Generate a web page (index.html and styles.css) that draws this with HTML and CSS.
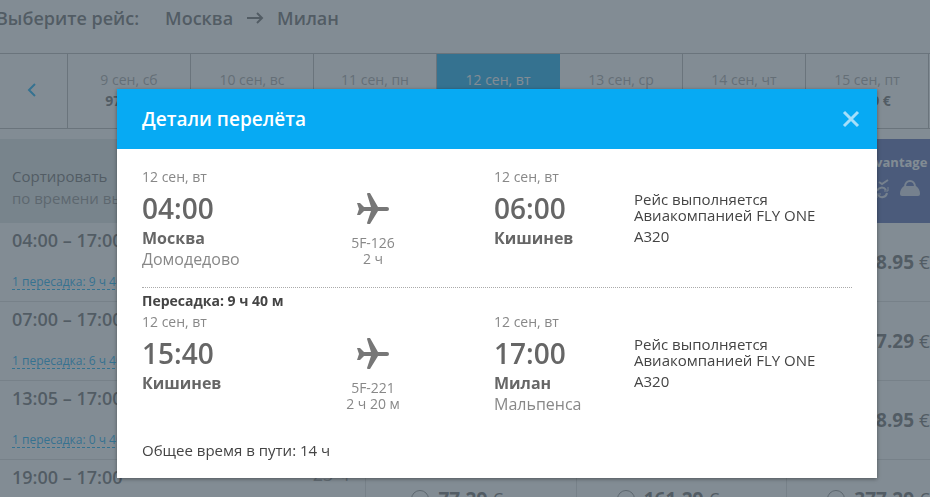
FILE: index.html
```
<!DOCTYPE html>
<html lang="ru">
<head>
  <meta charset="UTF-8">
  <meta name="viewport" content="width=device-width, initial-scale=1.0">
  <title>Выберите рейс</title>
  <link rel="stylesheet" href="styles.css">
</head>
<body>
  <main class="page">
    <h1 class="route">
      <span class="route-label">Выберите рейс:</span>
      <span>Москва</span>
      <svg class="route-arrow" width="18" height="12" viewBox="0 0 18 12"><path d="M1 6h15M11 1l5 5-5 5" fill="none" stroke="currentColor" stroke-width="2"/></svg>
      <span>Милан</span>
    </h1>

    <nav class="dates">
      <button class="prev" aria-label="Назад">
        <svg width="10" height="14" viewBox="0 0 10 14"><path d="M8 1L2 7l6 6" fill="none" stroke="currentColor" stroke-width="2"/></svg>
      </button>
      <button class="date">9 сен, сб<b>97.29 €</b></button>
      <button class="date">10 сен, вс</button>
      <button class="date">11 сен, пн</button>
      <button class="date active">12 сен, вт</button>
      <button class="date">13 сен, ср</button>
      <button class="date">14 сен, чт</button>
      <button class="date">15 сен, пт<b>97.29 €</b></button>
    </nav>

    <table class="flights">
      <thead>
        <tr>
          <th class="sort">Сортировать<br><span>по времени вылета</span></th>
          <th></th>
          <th></th>
          <th class="fare">
            Advantage
            <div class="fare-icons">
              <svg width="20" height="20" viewBox="0 0 20 20"><path d="M7 5V1h6v4M2 5h16v13H2z" fill="none" stroke="currentColor" stroke-width="2"/></svg>
              <svg width="20" height="20" viewBox="0 0 20 20"><g fill="none" stroke="currentColor" stroke-width="2"><path d="M8 3l3 2 6-4"/><path d="M6 12a5 5 0 0 1 9-1M16 14a5 5 0 0 1-9 2"/><path d="M17 8v4h-4M6 19v-4h4" stroke-width="1"/></g></svg>
              <svg width="20" height="20" viewBox="0 0 20 20"><path d="M5 8C5 0 15 0 15 8" fill="none" stroke="currentColor" stroke-width="2"/><path d="M4 7h12c3 2 4 5 4 8q0 2-2 2H2q-2 0-2-2c0-3 1-6 4-8z" fill="currentColor"/></svg>
              <svg width="20" height="20" viewBox="0 0 20 20"><circle cx="10" cy="11" r="8" fill="currentColor"/></svg>
            </div>
          </th>
        </tr>
      </thead>
      <tbody>
        <tr>
          <td class="flight"><div class="times">04:00 – 17:00</div><a href="#">1 пересадка: 9 ч 40 м</a></td>
          <td></td>
          <td></td>
          <td class="price"><label><input type="radio" name="fare"><b>378.95</b> €</label></td>
        </tr>
        <tr>
          <td class="flight"><div class="times">07:00 – 17:00</div><a href="#">1 пересадка: 6 ч 40 м</a></td>
          <td></td>
          <td></td>
          <td class="price"><label><input type="radio" name="fare"><b>377.29</b> €</label></td>
        </tr>
        <tr>
          <td class="flight"><div class="times">13:05 – 17:00</div><a href="#">1 пересадка: 0 ч 40 м</a></td>
          <td></td>
          <td></td>
          <td class="price"><label><input type="radio" name="fare"><b>378.95</b> €</label></td>
        </tr>
        <tr>
          <td class="flight"><div class="times">19:00 – 17:00 <span class="duration">23 ч</span></div></td>
          <td class="price"><label><input type="radio" name="fare"><b>77.29</b> €</label></td>
          <td class="price"><label><input type="radio" name="fare"><b>161.29</b> €</label></td>
          <td class="price"><label><input type="radio" name="fare"><b>377.29</b> €</label></td>
        </tr>
      </tbody>
    </table>
  </main>

  <div class="overlay">
    <section class="modal" role="dialog" aria-labelledby="modal-title">
      <header class="modal-header">
        <h2 id="modal-title">Детали перелёта</h2>
        <button class="close" aria-label="Закрыть">
          <svg width="18" height="18" viewBox="0 0 18 18"><path d="M2 2l14 14M16 2L2 16" stroke="currentColor" stroke-width="3"/></svg>
        </button>
      </header>
      <div class="modal-body">
        <div class="segment">
          <div class="point">
            <div class="day">12 сен, вт</div>
            <div class="time">04:00</div>
            <div class="city">Москва</div>
            <div class="airport">Домодедово</div>
          </div>
          <div class="leg">
            <svg class="plane" width="34" height="34" viewBox="0 0 34 34"><path d="M1 11h3l4 4h7L11 2q0-1 1-1h2l8 14h9q2 0 2 2t-2 2h-9l-8 13h-2q-1 0-1-1l4-12H8l-4 4H1l2-6z"/></svg>
            5F-126<br>2 ч
          </div>
          <div class="point">
            <div class="day">12 сен, вт</div>
            <div class="time">06:00</div>
            <div class="city">Кишинев</div>
          </div>
          <div class="carrier">
            Рейс выполняется<br>Авиакомпанией FLY ONE
            <div class="aircraft">A320</div>
          </div>
        </div>

        <div class="transfer">Пересадка: 9 ч 40 м</div>

        <div class="segment">
          <div class="point">
            <div class="day">12 сен, вт</div>
            <div class="time">15:40</div>
            <div class="city">Кишинев</div>
          </div>
          <div class="leg">
            <svg class="plane" width="34" height="34" viewBox="0 0 34 34"><path d="M1 11h3l4 4h7L11 2q0-1 1-1h2l8 14h9q2 0 2 2t-2 2h-9l-8 13h-2q-1 0-1-1l4-12H8l-4 4H1l2-6z"/></svg>
            5F-221<br>2 ч 20 м
          </div>
          <div class="point">
            <div class="day">12 сен, вт</div>
            <div class="time">17:00</div>
            <div class="city">Милан</div>
            <div class="airport">Мальпенса</div>
          </div>
          <div class="carrier">
            Рейс выполняется<br>Авиакомпанией FLY ONE
            <div class="aircraft">A320</div>
          </div>
        </div>

        <div class="total">Общее время в пути: 14 ч</div>
      </div>
    </section>
  </div>
</body>
</html>
```
FILE: styles.css
```
* {
  box-sizing: border-box;
}
body {
  margin: 0;
  font-family: "Open Sans", "Noto Sans", sans-serif;
  color: #666;
  background: #fff;
  overflow: hidden;
}
button {
  font: inherit;
  color: inherit;
  background: none;
  border: none;
  padding: 0;
  cursor: pointer;
}
.page {
  min-width: 998px;
}

/* route */
.route {
  display: flex;
  align-items: center;
  height: 53px;
  margin: 0 0 0 -4px;
  padding-bottom: 18px;
  font-size: 18px;
  font-weight: 600;
}
.route-label {
  margin-right: 26px;
}
.route-arrow {
  margin: 0 13px;
}

/* date strip */
.dates {
  display: flex;
  height: 76px;
  border-top: 1px solid #b0b0b0;
  border-bottom: 1px solid #b0b0b0;
}
.prev {
  width: 68px;
  padding-right: 3px;
  border-right: 1px solid #b0b0b0;
  color: #07aaf3;
}
.date {
  display: flex;
  flex-direction: column;
  align-items: center;
  width: 123px;
  padding-top: 15px;
  border-right: 1px solid #b0b0b0;
  font-size: 14px;
  line-height: 21px;
  color: #a0a0a0;
}
.date b {
  color: #666;
}
.date.active {
  background: #07aaf3;
  border-color: #07aaf3;
  color: #fff;
}

/* flights */
.flights {
  width: 998px;
  margin-top: 10px;
  table-layout: fixed;
  border-collapse: separate;
  border-spacing: 0;
}
.flights th {
  height: 84px;
  padding: 0;
  background: #dee5e4;
}
.flights .sort {
  width: 366px;
  padding: 12px 12px 0;
  text-align: left;
  font-size: 15px;
  line-height: 22px;
  font-weight: 400;
}
.sort span {
  color: #888;
}
.flights .fare {
  padding-bottom: 10px;
  background: #4d61ae;
  color: #fff;
  font-size: 13px;
}
.fare-icons {
  display: flex;
  justify-content: center;
  gap: 9px;
  margin-top: 8px;
  padding-left: 6px;
  color: #d8dcea;
}
.flights td {
  height: 79px;
  padding: 0;
  border-bottom: 1px solid #dcdcdc;
  border-right: 1px solid #dcdcdc;
}
.flights .flight {
  padding: 4px 16px 0 12px;
  vertical-align: top;
}
.times {
  display: flex;
  align-items: flex-start;
  justify-content: space-between;
  margin-bottom: 22px;
  font-size: 18px;
  line-height: 26px;
  font-weight: 600;
}
.duration {
  color: #999;
  font-weight: 400;
  line-height: 20px;
}
.flight a {
  display: block;
  width: max-content;
  border-bottom: 1px dashed #07aaf3;
  color: #07aaf3;
  font-size: 12px;
  line-height: 14px;
  text-decoration: none;
}
.flights .price {
  padding-right: 27px;
  text-align: center;
}
.price label {
  display: flex;
  align-items: center;
  justify-content: center;
  gap: 5px;
  font-size: 19px;
  line-height: 24px;
}
.price input {
  appearance: none;
  width: 18px;
  height: 18px;
  margin: 0 4px 0 0;
  border: 1px solid #888;
  border-radius: 50%;
}

/* modal */
.overlay {
  position: fixed;
  inset: 0;
  padding: 89px 0 0 117px;
  background: rgba(74, 88, 100, 0.69);
}
.modal {
  width: 760px;
  background: #fff;
  box-shadow: 0 1px 4px rgba(0, 0, 0, 0.4);
}
.modal-header {
  display: flex;
  align-items: center;
  justify-content: space-between;
  height: 60px;
  padding: 0 17px 0 25px;
  background: #07aaf3;
  color: #fff;
}
.modal-header h2 {
  margin: 0;
  font-size: 19px;
  font-weight: 600;
}
.close {
  display: flex;
  color: #a5dffa;
}
.modal-body {
  padding: 17px 25px;
}
.segment {
  display: grid;
  grid-template-columns: 110px 242px 140px 1fr;
  min-height: 104px;
}
.day {
  font-size: 14px;
  line-height: 22px;
  color: #888;
}
.time {
  font-size: 28px;
  line-height: 40px;
  font-weight: 600;
}
.city {
  font-size: 16px;
  line-height: 20px;
  font-weight: 700;
}
.airport {
  font-size: 16px;
  line-height: 22px;
  color: #888;
}
.leg {
  padding-top: 26px;
  text-align: center;
  font-size: 14px;
  line-height: 16px;
  color: #888;
}
.plane {
  display: block;
  margin: 0 auto 9px;
  fill: #777;
}
.carrier {
  padding-top: 25px;
  font-size: 15px;
  line-height: 16px;
  color: #444;
}
.aircraft {
  margin-top: 5px;
}
.transfer {
  margin-top: 17px;
  padding-top: 3px;
  border-top: 1px dotted #aaa;
  font-size: 14px;
  line-height: 20px;
  font-weight: 700;
  color: #444;
}
.total {
  margin-top: 25px;
  padding-bottom: 1px;
  font-size: 15px;
  line-height: 20px;
  color: #444;
}
```
